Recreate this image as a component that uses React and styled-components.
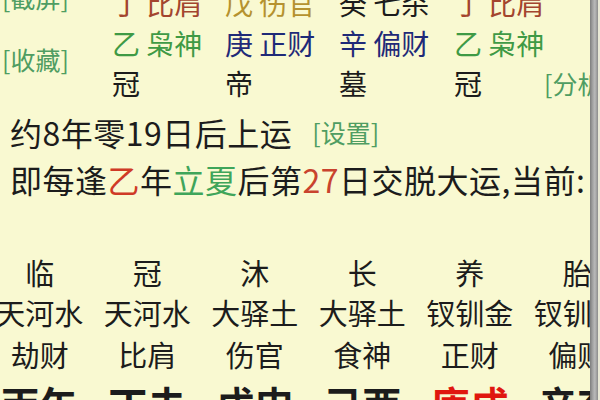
import { styled, createGlobalStyle } from "styled-components";

const GlobalStyle = createGlobalStyle`
    html, body {
        margin: 0;
        padding: 0;
        width: 600px;
        height: 400px;
        overflow: hidden;
        background: #f9f9d1;
    }
    body {
        font-family: "Noto Sans CJK SC", "Noto Sans", sans-serif;
        color: #1c1c1c;
    }
`;

const Screen = styled.div`
    display: flex;
    width: 600px;
    height: 400px;
`;

const Page = styled.div`
    width: 590px;
    flex-shrink: 0;
    height: 400px;
    overflow: hidden;
    background: #f9f9d1;
    display: flex;
    flex-direction: column;
`;

const Scroll = styled.div`
    width: 8px;
    flex-shrink: 0;
    height: 400px;
    background: linear-gradient(90deg, #7d7d7d 0, #a4a4a4 35%, #b9b9b9 60%, #8c8c8c 100%);
`;

const Rest = styled.div`
    flex: 1;
    background: #e9e9d6;
`;

const Top = styled.div`
    display: flex;
    margin-top: -17px;
`;

const Side = styled.div`
    width: 110px;
    flex-shrink: 0;
    display: flex;
    flex-direction: column;
    padding-left: 2px;
    margin-top: -4px;
    gap: 26px;
`;

const Tag = styled.span`
    font-size: 25px;
    line-height: 36px;
    color: #4f9d62;
    white-space: nowrap;
`;

const Pillars = styled.div`
    display: flex;
    flex-direction: column;
`;

const PillarRow = styled.div`
    display: grid;
    grid-template-columns: 113px 114px 115px 90px 100px;
    height: 40px;
    align-items: center;
`;

const Cell = styled.span`
    font-size: 28px;
    line-height: 40px;
    white-space: nowrap;
    color: ${(p) => p.$c || "#1c1c1c"};
`;

const Note = styled.div`
    display: flex;
    align-items: center;
    gap: 20px;
    padding-left: 10px;
    margin-top: ${(p) => p.$mt || 0}px;
    height: 48px;
    white-space: nowrap;
`;

const NoteText = styled.span`
    font-size: 32px;
    letter-spacing: 0.5px;
`;

const Hi = styled.span`
    color: ${(p) => p.$c};
`;

const Luck = styled.div`
    display: grid;
    grid-template-columns: repeat(6, 107.5px);
    margin-left: -14px;
    margin-top: ${(p) => p.$mt || 0}px;
    height: ${(p) => p.$h}px;
    align-items: center;
`;

const LuckCell = styled.span`
    text-align: center;
    white-space: nowrap;
    font-size: ${(p) => (p.$big ? 39 : 29)}px;
    font-weight: ${(p) => (p.$big ? 700 : 400)};
    color: ${(p) => p.$c || "#1c1c1c"};
`;

const pillars = [
    [
        { t: "丁 比肩", c: "#a3452e" },
        { t: "戊 伤官", c: "#b5922f" },
        { t: "癸 七杀", c: "#1c1c1c" },
        { t: "丁 比肩", c: "#a3452e" },
    ],
    [
        { t: "乙 枭神", c: "#3f9a45" },
        { t: "庚 正财", c: "#1f2a78" },
        { t: "辛 偏财", c: "#1f2a78" },
        { t: "乙 枭神", c: "#3f9a45" },
    ],
];

const stages = ["冠", "帝", "墓", "冠"];
const phases = ["临", "冠", "沐", "长", "养", "胎"];
const sounds = ["天河水", "天河水", "大驿土", "大驿土", "钗钏金", "钗钏金"];
const gods = ["劫财", "比肩", "伤官", "食神", "正财", "偏财"];
const luck = ["丙午", "丁未", "戊申", "己酉", "庚戌", "辛亥"];

export default function App() {
    return (
        <Screen>
            <GlobalStyle />
            <Page>
                <Top>
                    <Side>
                        <Tag>[截屏]</Tag>
                        <Tag>[收藏]</Tag>
                    </Side>
                    <Pillars>
                        {pillars.map((row, i) => (
                            <PillarRow key={i}>
                                {row.map((p, j) => (
                                    <Cell key={j} $c={p.c}>
                                        {p.t}
                                    </Cell>
                                ))}
                            </PillarRow>
                        ))}
                        <PillarRow>
                            {stages.map((t, j) => (
                                <Cell key={j}>{t}</Cell>
                            ))}
                            <Tag>[分析]</Tag>
                        </PillarRow>
                    </Pillars>
                </Top>
                <Note $mt={6}>
                    <NoteText>约8年零19日后上运</NoteText>
                    <Tag>[设置]</Tag>
                </Note>
                <Note $mt={1}>
                    <NoteText>
                        即每逢<Hi $c="#cf3a26">乙</Hi>年<Hi $c="#3fa55a">立夏</Hi>后第
                        <Hi $c="#c9432e">27</Hi>日交脱大运,当前:
                    </NoteText>
                </Note>
                <Luck $mt={49} $h={40}>
                    {phases.map((t, i) => (
                        <LuckCell key={i}>{t}</LuckCell>
                    ))}
                </Luck>
                <Luck $h={42}>
                    {sounds.map((t, i) => (
                        <LuckCell key={i}>{t}</LuckCell>
                    ))}
                </Luck>
                <Luck $h={44}>
                    {gods.map((t, i) => (
                        <LuckCell key={i}>{t}</LuckCell>
                    ))}
                </Luck>
                <Luck $h={44}>
                    {luck.map((t, i) => (
                        <LuckCell key={i} $big $c={i === 4 ? "#e0170f" : undefined}>
                            {t}
                        </LuckCell>
                    ))}
                </Luck>
            </Page>
            <Scroll />
            <Rest />
        </Screen>
    );
}
